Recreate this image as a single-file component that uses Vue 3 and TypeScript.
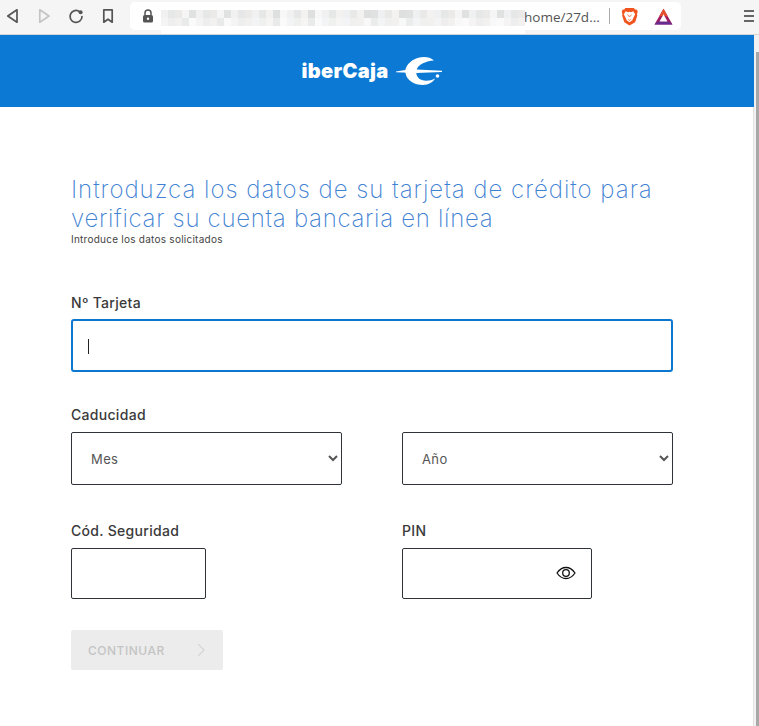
<script setup lang="ts">
const palette = ['#f1f1f1', '#e6e7e7', '#eceae8', '#f5f5f5', '#e0e1e1', '#eef0f1', '#e9e9e7', '#f3f2f1', '#dedfdf', '#f7f7f7']
const lightPalette = ['#f4f4f4', '#eeeeee', '#f2f1ef', '#f8f8f8', '#ebecec', '#f3f4f5', '#f0f0ee', '#f6f5f4', '#e9eaea', '#fafafa']
const blocks: string[] = Array.from({ length: 104 }, (_, i) => (i < 52 ? palette : lightPalette)[(i * 7 + (i % 5) * 3 + (i % 13)) % 10])
</script>

<template>
  <div class="page">
    <div class="toolbar">
      <div class="nav">
        <svg class="tool" viewBox="0 0 16 16"><path d="M13 1.800v12.400L3.800 8z" fill="none" stroke="#555" stroke-width="1.700" stroke-linejoin="round" /></svg>
        <svg class="tool" viewBox="0 0 16 16"><path d="M3.800 1.800v12.400L13 8z" fill="none" stroke="#c4c4c4" stroke-width="1.700" stroke-linejoin="round" /></svg>
        <svg class="tool" viewBox="0 0 16 16"><path d="M14 8.500a6 6 0 1 1-2.200-4.700" fill="none" stroke="#555" stroke-width="1.700" stroke-linecap="round" /><circle cx="12.600" cy="4.200" r="2" fill="#555" /></svg>
        <svg class="tool" viewBox="0 0 16 16"><path d="M3.800 1.800h8.400v12.400L8 11.200l-4.200 3z" fill="none" stroke="#555" stroke-width="1.700" stroke-linejoin="round" /></svg>
      </div>
      <div class="urlbar">
        <svg class="lock" viewBox="0 0 12 14"><path d="M3 6V4a3 3 0 0 1 6 0v2" fill="none" stroke="#555" stroke-width="1.500" /><rect x="1" y="6" width="10" height="7.500" rx="1.500" fill="#555" /><circle cx="6" cy="9.700" r="1.200" fill="#fff" /></svg>
        <div class="mosaic">
          <i v-for="(c, i) in blocks" :key="i" :style="{ background: c }"></i>
        </div>
        <span class="url">home/27d...</span>
        <span class="sep"></span>
        <svg class="brave" viewBox="0 0 18 20"><path d="M4.500 1h9l1.500 1.600 2 .2.700 2.400-.8 2.200.4 1.600-2.300 7L9 19.500 3.500 16l-2.300-7 .4-1.600L.8 5.200l.7-2.400 2-.2z" fill="#f1551f" /><path d="M5 4.500 7.500 5.500 9 5l1.500.5 2.500-1L15 7.500l-2 4-1 2.500-3 2-3-2-1-2.500-2-4z" fill="#fff" /><path d="M6.800 8.200 8.500 9.800h1l1.700-1.600M7.800 13l1.200 1 1.200-1" fill="none" stroke="#f1551f" stroke-width=".9" /></svg>
        <svg class="bat" viewBox="0 0 20 18"><path d="M10 .8 19.500 17.500H.5z" fill="#9e1f63" /><path d="M10 .8 14.800 9.200 10 8 5.200 9.200z" fill="#e8502c" /><path d="M.5 17.500l3.500-3.300h12l3.500 3.300z" fill="#662d91" /><path d="M10 6.500 14.200 14.200H5.800z" fill="#fff" /></svg>
      </div>
      <div class="menu"><b></b><b></b><b></b></div>
    </div>

    <div class="viewport">
      <div class="content">
        <header class="brand">
          <span class="wordmark">iberCaja</span>
          <svg class="wing" viewBox="0 0 46 28"><path d="M38 3.500C33-1 24-1 17 3c-6 4-8.500 9-7.500 13 1 7.500 9 12 17.500 12 5.500 0 10.500-3 12-6.500-5.500 3-13 3-16.500-.5-1.500-2-2.200-3.500-2.200-5l25.700-1 .3-1.300-25.500-1.200C22 8 29 4 38 3.500z" fill="#fff" /><path d="M0 14.500 14 12.300v3.400L0 15.200z" fill="#fff" /><circle cx="41.500" cy="19" r="1.800" fill="#fff" /></svg>
        </header>

        <main class="form">
          <h1><span class="line-one">Introduzca los datos de su tarjeta de crédito para</span> <span class="line-two">verificar su cuenta bancaria en línea</span></h1>
          <p class="hint">Introduce los datos solicitados</p>

          <label class="field card">
            <span>Nº Tarjeta</span>
            <span class="caret-wrap">
              <input class="active" type="text" aria-label="Nº Tarjeta" />
              <i class="caret"></i>
            </span>
          </label>

          <div class="row expiry">
            <label class="field wide">
              <span>Caducidad</span>
              <select aria-label="Mes"><option>Mes</option></select>
            </label>
            <label class="field no-title">
              <select aria-label="Año"><option>Año</option></select>
            </label>
          </div>

          <div class="row secure">
            <label class="field wide">
              <span>Cód. Seguridad</span>
              <input class="cvv" type="text" aria-label="Código de seguridad" />
            </label>
            <label class="field wide">
              <span>PIN</span>
              <span class="pin">
                <input type="password" aria-label="PIN" />
                <svg class="eye" viewBox="0 0 20 14"><path d="M1 7c2.500-3.700 5.500-5.500 9-5.500s6.500 1.800 9 5.500c-2.500 3.700-5.500 5.500-9 5.500S3.500 10.700 1 7z" fill="none" stroke="#111" stroke-width="1.300" /><circle cx="10" cy="7" r="3.300" fill="none" stroke="#111" stroke-width="1.300" /></svg>
              </span>
            </label>
          </div>

          <button class="continue" type="button" disabled>
            <span>CONTINUAR</span>
            <svg viewBox="0 0 10 16"><path d="M1.500 1.500 8 8l-6.500 6.500" fill="none" stroke="#cfcfcf" stroke-width="1.200" /></svg>
          </button>
        </main>
      </div>
      <div class="scrollbar"><div class="thumb"></div></div>
    </div>
  </div>
</template>

<style>
html, body { margin: 0; background: #fff; overflow: hidden; }
</style>

<style scoped>
.page { width: 759px; height: 726px; overflow: hidden; display: flex; flex-direction: column; font-family: Inter, "Liberation Sans", sans-serif; }
.toolbar { height: 34px; flex: none; display: flex; align-items: flex-start; background: #f5f5f5; border-bottom: 1px solid #d4d4d4; }
.nav { display: flex; gap: 16px; padding: 8px 0 0 4px; width: 126px; box-sizing: border-box; }
.tool { width: 16px; height: 16px; display: block; }
.urlbar { position: relative; width: 551px; height: 28px; margin: 2px 0 0 4px; background: #fff; border-radius: 5px; display: flex; align-items: center; padding-left: 12px; box-sizing: border-box; }
.lock { width: 12px; height: 14px; flex: none; }
.mosaic { position: absolute; left: 31px; top: 8px; width: 364px; height: 24px; display: grid; grid-template-columns: repeat(52, 7px); grid-auto-rows: 8px; background: #fff; z-index: 1; }
.mosaic i { display: block; }
.url { margin-left: 370px; font: 13.500px/16px "Open Sans", Roboto, sans-serif; color: #555; white-space: nowrap; width: 85px; padding-top: 2px; }
.sep { width: 1px; height: 16px; background: #aaa; flex: none; }
.brave { width: 17px; height: 19px; margin-left: 11px; flex: none; }
.bat { width: 19px; height: 17px; margin-left: 16px; flex: none; }
.menu { margin: 10px 0 0 63px; width: 10px; display: flex; flex-direction: column; gap: 3px; }
.menu b { height: 2px; background: #666; display: block; }

.viewport { flex: 1; display: flex; min-height: 0; }
.content { flex: 1; min-width: 0; background: #fff; box-shadow: inset -1px 0 #e2e2e2; }
.scrollbar { width: 5px; background: #f1f1f1; padding: 17px 0 0 2px; box-sizing: border-box; display: flex; }
.thumb { flex: 1; background: #a8a8a8; }

.brand { height: 72px; background: #0c7ad4; display: flex; align-items: center; justify-content: center; gap: 8px; padding-right: 10px; }
.wordmark { font: 900 20px/24px Inter, sans-serif; color: #fff; letter-spacing: .3px; }
.wing { width: 46px; height: 28px; display: block; }

.form { width: 602px; margin-left: 71px; padding-top: 68px; }
h1 { margin: 0; font: 200 24px/29px Inter, sans-serif; color: #3f82d3; }
.line-one, .line-two { display: block; white-space: nowrap; }
.line-one { letter-spacing: .98px; }
.line-two { letter-spacing: .7px; }
.hint { margin: 0; font: 400 10px/13px Inter, sans-serif; color: #444; letter-spacing: .25px; }
.field { display: flex; flex-direction: column; gap: 7px; min-width: 0; }
.wide { gap: 8px; }
.field > span:first-child:not(.caret-wrap):not(.pin) { font: 500 14px/18px Inter, sans-serif; color: #3a3a3a; letter-spacing: .3px; }
.card { margin-top: 48px; }
.caret-wrap, .pin { position: relative; display: block; }
input, select { display: block; width: 100%; box-sizing: border-box; background: #fff; border: 1px solid #2f3338; border-radius: 2px; outline: none; font-family: Inter, sans-serif; }
input { height: 51px; }
.active { height: 53px; border: 2px solid #0c77cf; border-radius: 3px; }
.caret { position: absolute; left: 17px; top: 20px; width: 1px; height: 15px; background: #222; }
select { height: 53px; padding: 1px 0 0 15px; font-size: 13px; color: #555; letter-spacing: .4px; }
.row { display: grid; grid-template-columns: 271px 271px; column-gap: 60px; }
.expiry { margin-top: 34px; }
.no-title { padding-top: 26px; }
.secure { margin-top: 37px; }
.cvv { width: 135px; }
.pin { width: 190px; }
.eye { position: absolute; right: 16px; top: 18px; width: 20px; height: 14px; }
.continue { margin-top: 31px; width: 152px; height: 40px; padding: 0 17px; border: 0; border-radius: 2px; background: #ececec; display: flex; align-items: center; justify-content: space-between; font: 500 12px/16px Inter, sans-serif; color: #c4c4c4; letter-spacing: .5px; }
.continue span { padding-top: 1px; }
.continue svg { width: 9px; height: 14px; }
</style>
